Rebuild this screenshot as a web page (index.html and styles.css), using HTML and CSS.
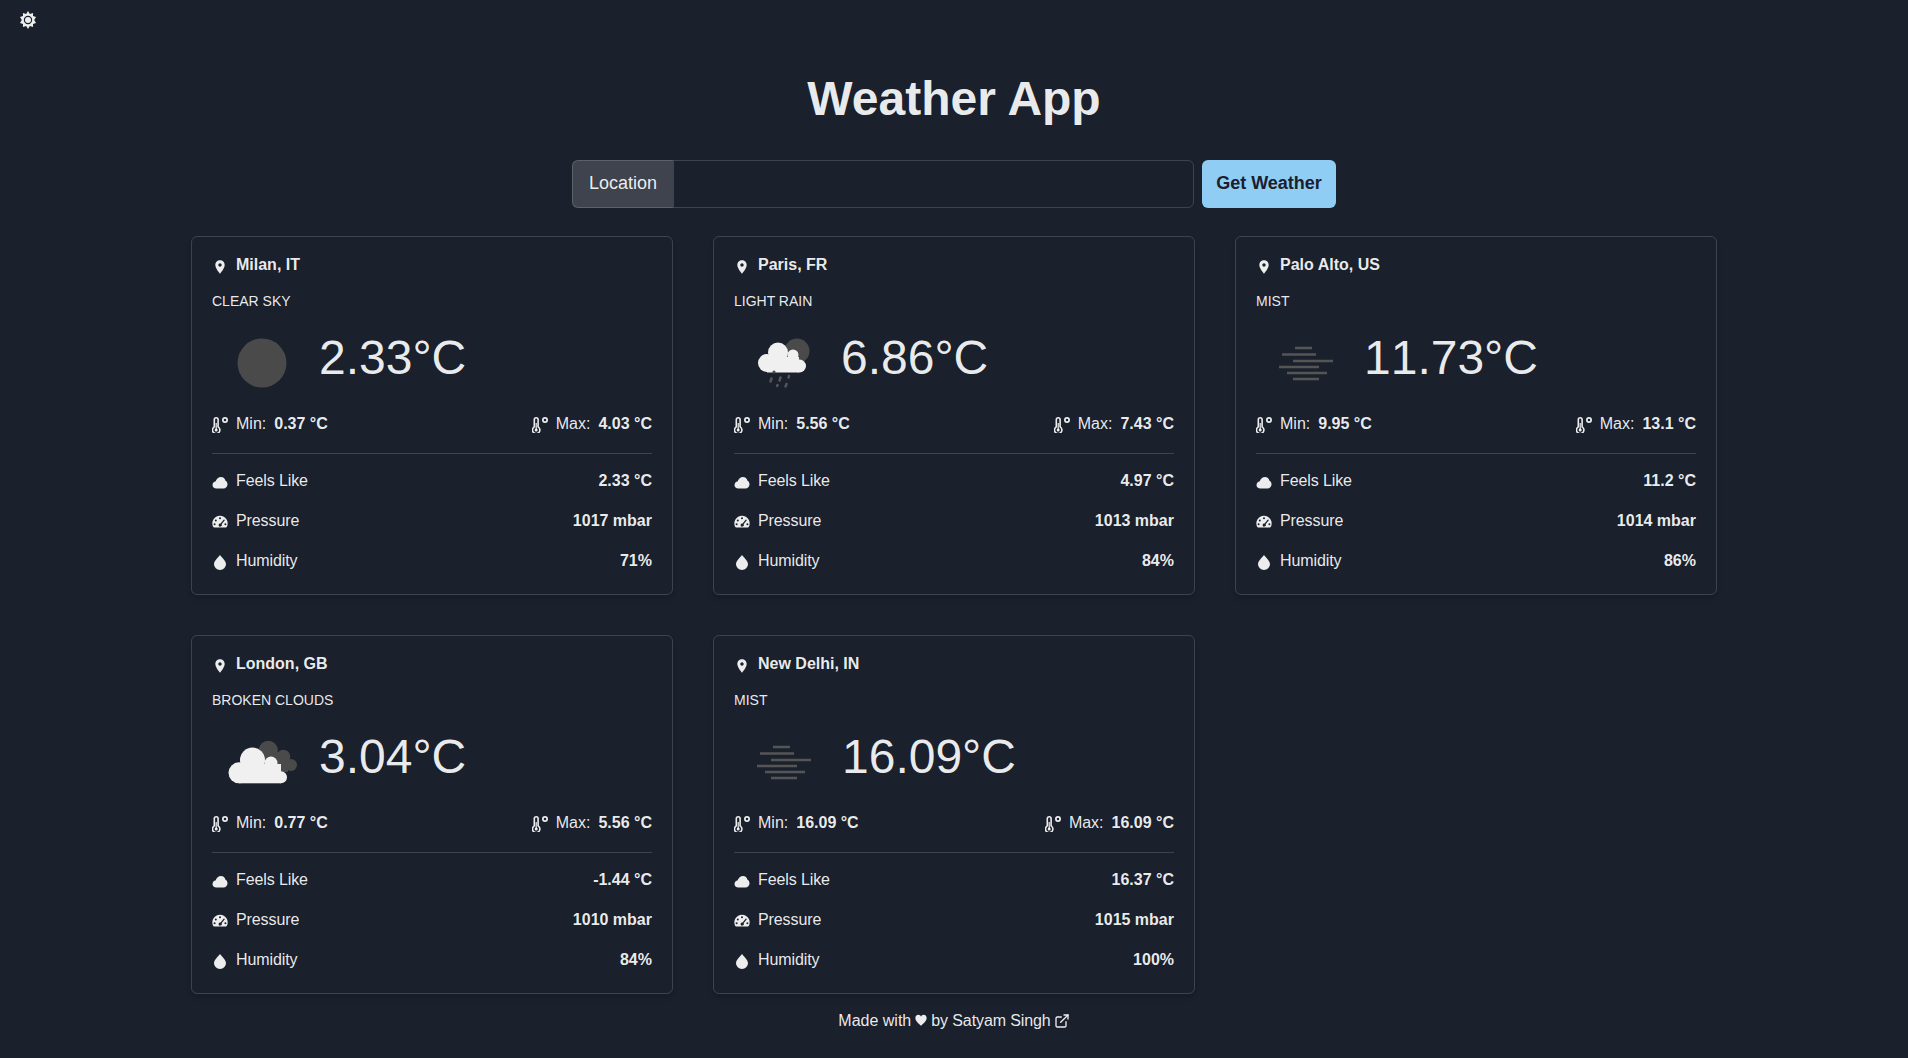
FILE: index.html
```html
<!DOCTYPE html>
<html lang="en">
<head>
    <meta charset="UTF-8">
    <meta name="viewport" content="width=device-width, initial-scale=1.0">
    <title>Weather App</title>
    <link rel="stylesheet" href="styles.css">
</head>
<body>

<svg class="defs" width="0" height="0" aria-hidden="true">
    <symbol id="i-pin" viewBox="0 0 24 24">
        <path d="M12 2C8.130 2 5 5.130 5 9c0 5.250 7 13 7 13s7-7.750 7-13c0-3.870-3.130-7-7-7zm0 9.500c-1.380 0-2.500-1.120-2.500-2.500s1.120-2.500 2.500-2.500 2.500 1.120 2.500 2.500-1.120 2.500-2.500 2.500z"/>
    </symbol>
    <symbol id="i-temp" viewBox="0 0 16 16">
        <path fill-rule="evenodd" d="M1.500 9.400V2.700a2.700 2.700 0 0 1 5.400 0v6.700a4.500 4.500 0 1 1-5.400 0zM3.100 10.300V2.700a1.100 1.100 0 0 1 2.200 0v7.600a2.900 2.900 0 1 1-2.200 0z"/>
        <circle cx="4.200" cy="12.900" r="1.500"/>
        <rect x="3.600" y="6" width="1.200" height="7"/>
        <path fill-rule="evenodd" d="M13 0a3 3 0 1 1 0 6 3 3 0 0 1 0-6zm0 1.700a1.300 1.300 0 1 0 0 2.600 1.300 1.300 0 0 0 0-2.600z"/>
    </symbol>
    <symbol id="i-cloud" viewBox="0 0 16 16">
        <path d="M4.500 14.500C2 14.500.500 13 .500 11c0-2 1.500-3.300 3-3.500C4.500 4.800 6.500 3 9 3c2.300 0 4 1.500 4.500 3.800 1.300.6 2 2 2 3.500 0 2.500-1.800 4.200-4 4.200z"/>
    </symbol>
    <symbol id="i-gauge" viewBox="0 0 16 16">
        <path fill-rule="evenodd" d="M8 1.800a7.600 7.600 0 0 1 6.700 11.300.9.900 0 0 1-.8.500H2.100a.9.9 0 0 1-.8-.5A7.600 7.600 0 0 1 8 1.800zM8 3.300a1 1 0 1 0 0 2 1 1 0 0 0 0-2zM3.800 5.500a1 1 0 1 0 0 2 1 1 0 0 0 0-2zM2.600 9.300a1 1 0 1 0 0 2 1 1 0 0 0 0-2zM13.400 9.300a1 1 0 1 0 0 2 1 1 0 0 0 0-2zM11.600 5.800l-3 3.700a1.600 1.600 0 1 0 1 .8l3-3.700a.6.6 0 0 0-1-.8z"/>
    </symbol>
    <symbol id="i-drop" viewBox="0 0 16 16">
        <path d="M8 1C6.800 3.200 2 6.200 2 10.300a6 5.700 0 0 0 12 0C14 6.200 9.200 3.200 8 1z"/>
    </symbol>
    <symbol id="i-clear" viewBox="0 0 100 100">
        <circle cx="50" cy="50" r="24.500" fill="#4a4a4a"/>
    </symbol>
    <symbol id="i-rain" viewBox="0 0 100 100">
        <circle cx="63" cy="38" r="12.500" fill="#4a4a4a"/>
        <g fill="#f0f0f0">
            <circle cx="44" cy="39.500" r="10"/>
            <circle cx="59" cy="42" r="5.500"/>
            <circle cx="33" cy="50" r="9"/>
            <circle cx="65.500" cy="53" r="6.500"/>
            <rect x="33" y="44" width="32" height="15.500"/>
        </g>
        <circle cx="40" cy="59" r="1.600" fill="#4a4a4a"/>
        <g stroke="#555" stroke-width="2.500" stroke-linecap="round">
            <path d="M37.500 65.500l-1 3"/>
            <path d="M46.500 64.500l-1 3"/>
            <path d="M55 63l-.5 1.500"/>
            <path d="M43.500 72l-.3 1"/>
            <path d="M52.500 71l-1 2.500"/>
        </g>
    </symbol>
    <symbol id="i-mist" viewBox="0 0 100 100">
        <g stroke="#555" stroke-width="2.500">
            <path d="M39 35h17"/>
            <path d="M26 41.500h34"/>
            <path d="M37 48h40"/>
            <path d="M23 54h40"/>
            <path d="M31 60h40"/>
            <path d="M37 66h26"/>
        </g>
    </symbol>
    <symbol id="i-broken" viewBox="0 0 100 100">
        <g fill="#4a4a4a">
            <circle cx="56.300" cy="38.200" r="9.500"/>
            <circle cx="71.300" cy="44.700" r="7"/>
            <circle cx="79" cy="53" r="6"/>
            <rect x="50" y="40" width="26" height="20"/>
        </g>
        <g fill="#f0f0f0">
            <circle cx="40.500" cy="48" r="12.500"/>
            <circle cx="59" cy="51" r="6.500"/>
            <circle cx="27" cy="60.800" r="10.500"/>
            <circle cx="69" cy="65.300" r="6"/>
            <rect x="27" y="52" width="42" height="19.300"/>
            <rect x="52" y="55" width="12" height="12"/>
        </g>
    </symbol>
</svg>

<div class="topbar">
    <button class="theme-btn" type="button" aria-label="Toggle theme">
        <svg viewBox="0 0 18 18" width="18" height="18">
            <path fill-rule="evenodd" d="M9 0l1.800 3 3.300-1.100-.1 3.100 3 1-1.800 3 1.800 3-3 1 .1 3-3.300-1L9 18l-1.800-3-3.300 1 .1-3-3-1 1.800-3L1 6l3-1-.1-3.100 3.300 1.100zM9 4.800a4.200 4.200 0 1 0 0 8.400 4.200 4.200 0 0 0 0-8.400z"/>
            <circle cx="9" cy="9" r="3"/>
        </svg>
    </button>
</div>

<h1 class="title">Weather App</h1>

<form class="search">
    <div class="input-group">
        <label class="addon" for="location">Location</label>
        <input class="location-input" type="text" id="location" name="location">
    </div>
    <button class="get-btn" type="submit">Get Weather</button>
</form>

<main class="cards">

    <section class="card">
        <h2 class="city"><svg class="icon"><use href="#i-pin"/></svg>Milan, IT</h2>
        <p class="desc">CLEAR SKY</p>
        <div class="now">
            <svg class="weather-icon"><use href="#i-clear"/></svg>
            <span class="temp">2.33°C</span>
        </div>
        <div class="minmax">
            <span class="mm"><svg class="icon"><use href="#i-temp"/></svg>Min:<b>0.37 °C</b></span>
            <span class="mm"><svg class="icon"><use href="#i-temp"/></svg>Max:<b>4.03 °C</b></span>
        </div>
        <div class="row"><span class="key"><svg class="icon"><use href="#i-cloud"/></svg>Feels Like</span><b>2.33 °C</b></div>
        <div class="row"><span class="key"><svg class="icon"><use href="#i-gauge"/></svg>Pressure</span><b>1017 mbar</b></div>
        <div class="row"><span class="key"><svg class="icon"><use href="#i-drop"/></svg>Humidity</span><b>71%</b></div>
    </section>

    <section class="card">
        <h2 class="city"><svg class="icon"><use href="#i-pin"/></svg>Paris, FR</h2>
        <p class="desc">LIGHT RAIN</p>
        <div class="now">
            <svg class="weather-icon"><use href="#i-rain"/></svg>
            <span class="temp">6.86°C</span>
        </div>
        <div class="minmax">
            <span class="mm"><svg class="icon"><use href="#i-temp"/></svg>Min:<b>5.56 °C</b></span>
            <span class="mm"><svg class="icon"><use href="#i-temp"/></svg>Max:<b>7.43 °C</b></span>
        </div>
        <div class="row"><span class="key"><svg class="icon"><use href="#i-cloud"/></svg>Feels Like</span><b>4.97 °C</b></div>
        <div class="row"><span class="key"><svg class="icon"><use href="#i-gauge"/></svg>Pressure</span><b>1013 mbar</b></div>
        <div class="row"><span class="key"><svg class="icon"><use href="#i-drop"/></svg>Humidity</span><b>84%</b></div>
    </section>

    <section class="card">
        <h2 class="city"><svg class="icon"><use href="#i-pin"/></svg>Palo Alto, US</h2>
        <p class="desc">MIST</p>
        <div class="now">
            <svg class="weather-icon"><use href="#i-mist"/></svg>
            <span class="temp ones">11.73°C</span>
        </div>
        <div class="minmax">
            <span class="mm"><svg class="icon"><use href="#i-temp"/></svg>Min:<b>9.95 °C</b></span>
            <span class="mm"><svg class="icon"><use href="#i-temp"/></svg>Max:<b>13.1 °C</b></span>
        </div>
        <div class="row"><span class="key"><svg class="icon"><use href="#i-cloud"/></svg>Feels Like</span><b>11.2 °C</b></div>
        <div class="row"><span class="key"><svg class="icon"><use href="#i-gauge"/></svg>Pressure</span><b>1014 mbar</b></div>
        <div class="row"><span class="key"><svg class="icon"><use href="#i-drop"/></svg>Humidity</span><b>86%</b></div>
    </section>

    <section class="card">
        <h2 class="city"><svg class="icon"><use href="#i-pin"/></svg>London, GB</h2>
        <p class="desc">BROKEN CLOUDS</p>
        <div class="now">
            <svg class="weather-icon"><use href="#i-broken"/></svg>
            <span class="temp">3.04°C</span>
        </div>
        <div class="minmax">
            <span class="mm"><svg class="icon"><use href="#i-temp"/></svg>Min:<b>0.77 °C</b></span>
            <span class="mm"><svg class="icon"><use href="#i-temp"/></svg>Max:<b>5.56 °C</b></span>
        </div>
        <div class="row"><span class="key"><svg class="icon"><use href="#i-cloud"/></svg>Feels Like</span><b>-1.44 °C</b></div>
        <div class="row"><span class="key"><svg class="icon"><use href="#i-gauge"/></svg>Pressure</span><b>1010 mbar</b></div>
        <div class="row"><span class="key"><svg class="icon"><use href="#i-drop"/></svg>Humidity</span><b>84%</b></div>
    </section>

    <section class="card">
        <h2 class="city"><svg class="icon"><use href="#i-pin"/></svg>New Delhi, IN</h2>
        <p class="desc">MIST</p>
        <div class="now">
            <svg class="weather-icon"><use href="#i-mist"/></svg>
            <span class="temp ones">16.09°C</span>
        </div>
        <div class="minmax">
            <span class="mm"><svg class="icon"><use href="#i-temp"/></svg>Min:<b>16.09 °C</b></span>
            <span class="mm"><svg class="icon"><use href="#i-temp"/></svg>Max:<b>16.09 °C</b></span>
        </div>
        <div class="row"><span class="key"><svg class="icon"><use href="#i-cloud"/></svg>Feels Like</span><b>16.37 °C</b></div>
        <div class="row"><span class="key"><svg class="icon"><use href="#i-gauge"/></svg>Pressure</span><b>1015 mbar</b></div>
        <div class="row"><span class="key"><svg class="icon"><use href="#i-drop"/></svg>Humidity</span><b>100%</b></div>
    </section>

</main>

<footer class="footer">
    <span>Made with</span>
    <svg class="heart" viewBox="0 0 16 16"><path d="M8 15.500C5 12.500 .500 9.500 .500 5.500.500 2.500 2.500 1 4.500 1 6 1 7.400 2 8 3.500 8.600 2 10 1 11.500 1c2 0 4 1.500 4 4.500 0 4-4.500 7-7.500 10z"/></svg>
    <span class="author">by Satyam Singh</span>
    <svg class="external" viewBox="0 0 24 24"><path d="M18 13v6a2 2 0 0 1-2 2H5a2 2 0 0 1-2-2V8a2 2 0 0 1 2-2h6"/><path d="M15 3h6v6"/><path d="M10 14L21 3"/></svg>
</footer>

</body>
</html>
```

FILE: styles.css
```css
* {
    box-sizing: border-box;
}
body {
    margin: 0;
    background-color: #1a202c;
    color: rgba(255, 255, 255, 0.92);
    font-family: Helvetica, "Liberation Sans", Arial, sans-serif;
    font-size: 16px;
    line-height: 24px;
}
.defs {
    display: block;
    height: 0;
}
.topbar {
    height: 40px;
    padding-left: 8px;
}
.theme-btn {
    display: flex;
    align-items: center;
    justify-content: center;
    width: 40px;
    height: 40px;
    padding: 0;
    border: none;
    background: none;
    fill: rgba(255, 255, 255, 0.92);
    fill-rule: evenodd;
}
.title {
    margin: 30px 0 32px;
    font-size: 48px;
    line-height: 58px;
    font-weight: 700;
    text-align: center;
}
.search {
    display: flex;
    justify-content: center;
    gap: 8px;
    margin-bottom: 28px;
}
.input-group {
    display: flex;
    width: 622px;
    height: 48px;
}
.addon {
    display: flex;
    align-items: center;
    justify-content: center;
    width: 101px;
    padding-bottom: 2px;
    background-color: rgba(255, 255, 255, 0.16);
    border: 1px solid rgba(255, 255, 255, 0.16);
    border-right: none;
    border-radius: 6px 0 0 6px;
    font-size: 18px;
}
.location-input {
    flex: 1;
    background: none;
    border: 1px solid rgba(255, 255, 255, 0.16);
    border-radius: 0 6px 6px 0;
}
.get-btn {
    width: 134px;
    height: 48px;
    padding: 0 0 2px;
    background-color: #90cdf4;
    color: #1a202c;
    border: none;
    border-radius: 6px;
    font-family: inherit;
    font-size: 18px;
    font-weight: 700;
}
.cards {
    display: grid;
    grid-template-columns: repeat(3, 482px);
    justify-content: center;
    gap: 40px;
}
.card {
    height: 359px;
    padding: 16px 20px;
    border: 1px solid rgba(255, 255, 255, 0.16);
    border-radius: 6px;
    box-shadow: 0 4px 6px -1px rgba(0, 0, 0, 0.1), 0 2px 4px -1px rgba(0, 0, 0, 0.06);
}
.icon {
    flex: none;
    width: 16px;
    height: 16px;
    margin-right: 8px;
    fill: rgba(255, 255, 255, 0.92);
}
.city {
    display: flex;
    align-items: center;
    margin: 0;
    font-size: 16px;
    line-height: 24px;
    font-weight: 700;
}
.city .icon {
    margin-top: 3px;
}
.desc {
    margin: 12px 0 0;
    font-size: 14px;
    line-height: 24px;
}
.now {
    display: flex;
    align-items: flex-start;
    height: 100px;
}
.weather-icon {
    flex: none;
    width: 100px;
    height: 100px;
}
.temp {
    margin: 16px 0 0 7px;
    font-size: 48px;
    line-height: 58px;
    font-kerning: none;
}
.temp.ones {
    margin-left: 8px;
}
.minmax {
    display: flex;
    justify-content: space-between;
    margin-top: -1px;
    padding-bottom: 17px;
    border-bottom: 1px solid rgba(255, 255, 255, 0.16);
    margin-bottom: 15px;
}
.mm {
    display: flex;
    align-items: center;
}
.mm b {
    margin-left: 8px;
}
.mm .icon {
    margin-top: 2px;
}
.row {
    display: flex;
    justify-content: space-between;
    align-items: center;
    height: 24px;
    margin-bottom: 16px;
}
.key {
    display: flex;
    align-items: center;
    letter-spacing: -0.1px;
}
.key .icon {
    margin-top: 2px;
}
.footer {
    display: flex;
    justify-content: center;
    align-items: center;
    gap: 4px;
    margin-top: 15px;
}
.author {
    letter-spacing: -0.1px;
}
.heart {
    width: 12px;
    height: 12px;
    margin-bottom: 2px;
    fill: rgba(255, 255, 255, 0.92);
}
.external {
    width: 16px;
    height: 16px;
    margin-left: -1px;
    fill: none;
    stroke: rgba(255, 255, 255, 0.92);
    stroke-width: 2;
    stroke-linecap: round;
    stroke-linejoin: round;
}
```
